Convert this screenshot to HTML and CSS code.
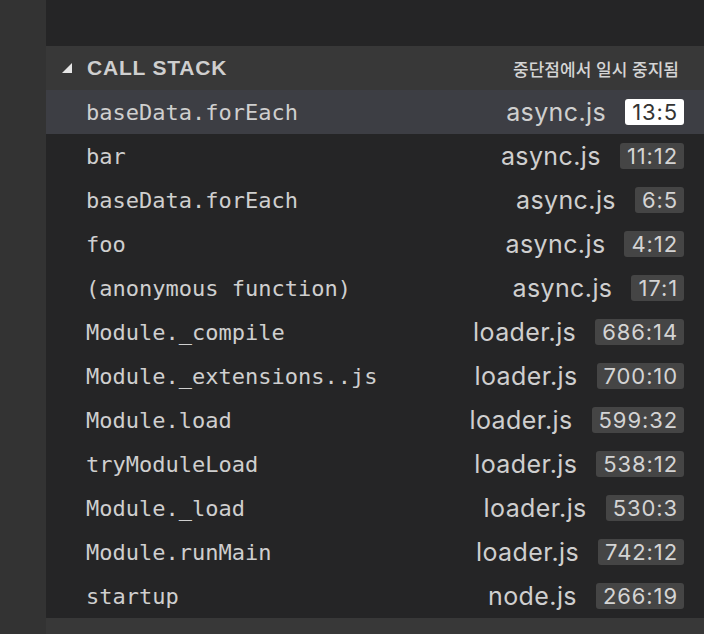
FILE: index.html
```html
<!DOCTYPE html>
<html lang="ko">
<head>
<meta charset="utf-8">
<link rel="stylesheet" href="styles.css">
</head>
<body>
<div class="app">
  <div class="activity"></div>
  <div class="pane">
    <div class="top"></div>
    <div class="header">
      <svg class="twisty" width="12" height="12" viewBox="0 0 12 12"><polygon points="11,1 11,11 1,11" fill="#e6e6e6"/></svg>
      <span class="title">CALL STACK</span>
      <span class="state">중단점에서 일시 중지됨</span>
    </div>
    <div class="list">
      <div class="row selected"><span class="fn">baseData.forEach</span><span class="file">async.js</span><span class="pos">13:5</span></div>
      <div class="row"><span class="fn">bar</span><span class="file">async.js</span><span class="pos">11:12</span></div>
      <div class="row"><span class="fn">baseData.forEach</span><span class="file">async.js</span><span class="pos">6:5</span></div>
      <div class="row"><span class="fn">foo</span><span class="file">async.js</span><span class="pos">4:12</span></div>
      <div class="row"><span class="fn">(anonymous function)</span><span class="file">async.js</span><span class="pos">17:1</span></div>
      <div class="row"><span class="fn">Module._compile</span><span class="file">loader.js</span><span class="pos">686:14</span></div>
      <div class="row"><span class="fn">Module._extensions..js</span><span class="file">loader.js</span><span class="pos">700:10</span></div>
      <div class="row"><span class="fn">Module.load</span><span class="file">loader.js</span><span class="pos">599:32</span></div>
      <div class="row"><span class="fn">tryModuleLoad</span><span class="file">loader.js</span><span class="pos">538:12</span></div>
      <div class="row"><span class="fn">Module._load</span><span class="file">loader.js</span><span class="pos">530:3</span></div>
      <div class="row"><span class="fn">Module.runMain</span><span class="file">loader.js</span><span class="pos">742:12</span></div>
      <div class="row"><span class="fn">startup</span><span class="file">node.js</span><span class="pos">266:19</span></div>
    </div>
    <div class="bottom"></div>
  </div>
</div>
</body>
</html>
```

FILE: styles.css
```css
html, body {
  margin: 0;
  padding: 0;
  background: #252526;
}
.app {
  display: flex;
  width: 704px;
  height: 634px;
  overflow: hidden;
}
.activity {
  width: 46px;
  flex: none;
  background: #333333;
}
.pane {
  flex: 1;
  display: flex;
  flex-direction: column;
  background: #252526;
}
.top {
  height: 46px;
  flex: none;
}
.header {
  height: 44px;
  flex: none;
  display: flex;
  align-items: center;
  background: #383838;
  padding: 0 25px 0 15px;
}
.twisty {
  display: block;
  margin-right: 14px;
}
.title {
  font-family: "Liberation Sans", Arial, sans-serif;
  font-weight: bold;
  font-size: 21px;
  color: #cfcfcf;
  letter-spacing: 0.8px;
}
.state {
  margin-left: auto;
  font-family: "Noto Sans CJK KR", sans-serif;
  font-size: 17px;
  font-weight: 500;
  color: #d4d4d4;
}
.list {
  display: flex;
  flex-direction: column;
}
.row {
  height: 44px;
  display: flex;
  align-items: center;
  padding: 0 20px 0 40px;
  color: #cccccc;
}
.row.selected {
  background: #3d3e44;
}
.fn {
  font-family: "DejaVu Sans Mono", monospace;
  font-size: 22px;
  color: #cfcfcf;
}
.file {
  margin-left: auto;
  font-family: Inter, "Open Sans", sans-serif;
  font-size: 25px;
  font-weight: 400;
  letter-spacing: 0.4px;
  color: #cfcfcf;
}
.pos {
  margin-left: 19px;
  font-family: Inter, "Open Sans", sans-serif;
  font-size: 22px;
  line-height: 26px;
  letter-spacing: 0.9px;
  padding: 0 6px 0 7px;
  border-radius: 3px;
  background: #454545;
  color: #d4d4d4;
}
.row.selected .pos {
  background: #ffffff;
  color: #333333;
}
.bottom {
  flex: 1;
  background: #383838;
}
```
